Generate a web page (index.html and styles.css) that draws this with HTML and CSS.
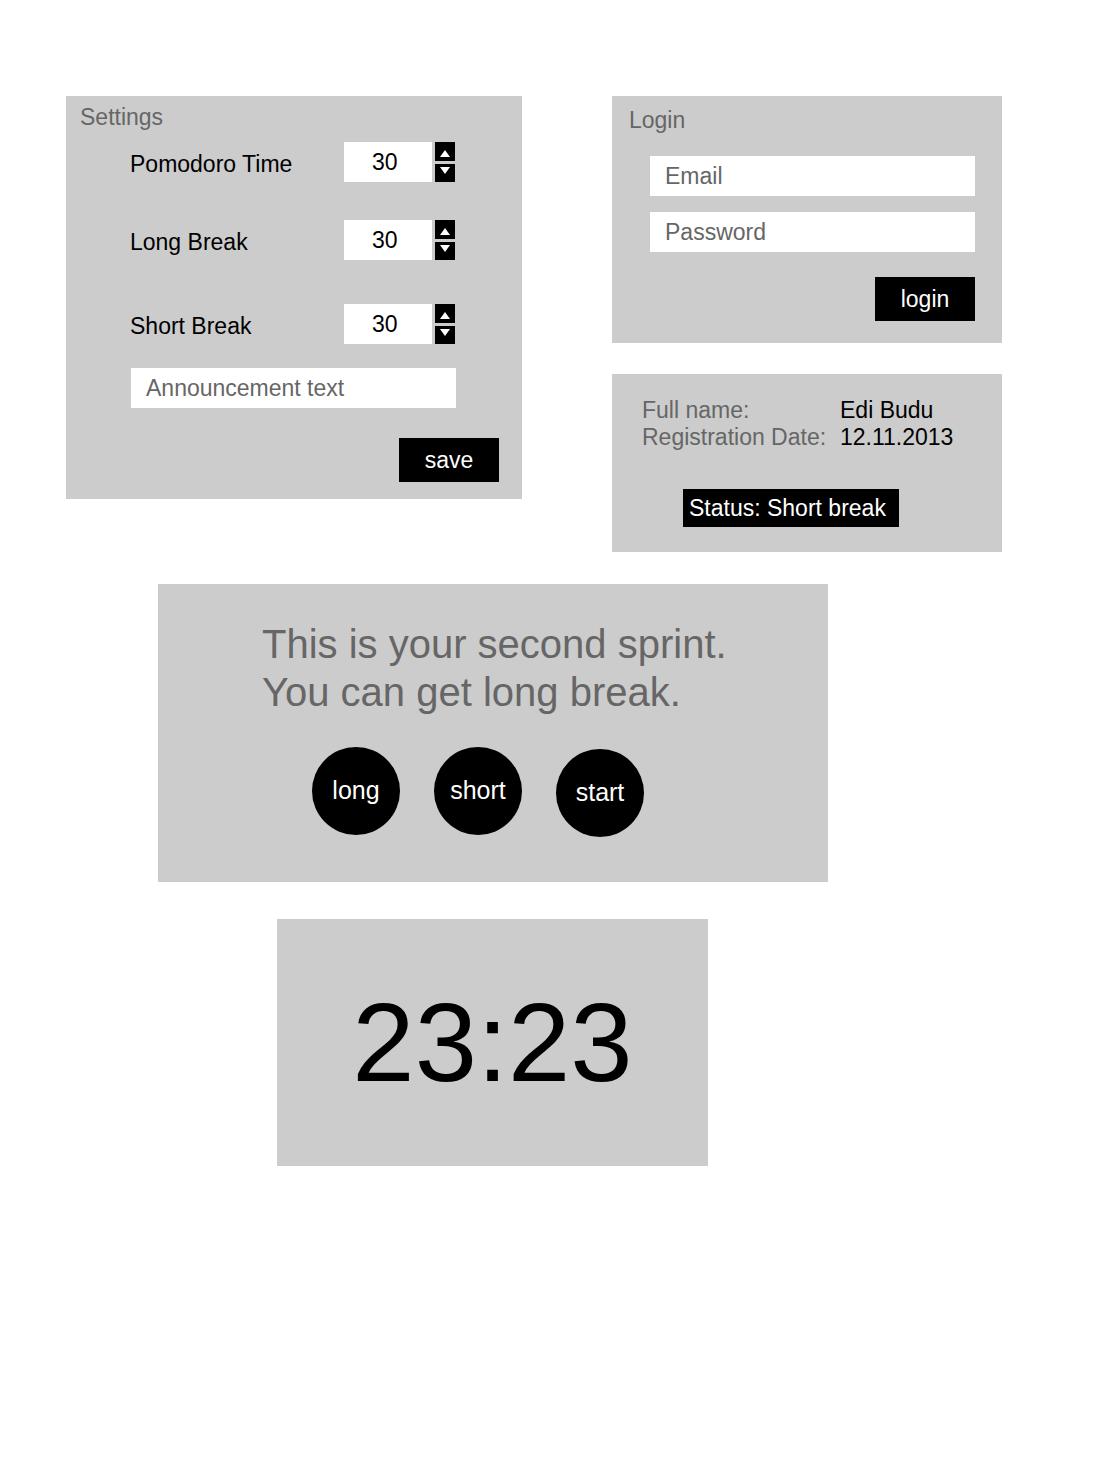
FILE: index.html
```html
<!DOCTYPE html>
<html lang="en">
<head>
<meta charset="utf-8">
<title>Pomodoro wireframe</title>
<link rel="stylesheet" href="styles.css">
</head>
<body>
<div class="canvas">
  <div class="top-row">
    <section class="panel settings">
      <div class="panel-title">Settings</div>
      <div class="setting-row row-1">
        <span class="setting-label">Pomodoro Time</span>
        <div class="num-field">30</div>
        <svg class="spinner" width="20" height="40" viewBox="0 0 20 40" aria-hidden="true">
          <rect x="0" y="0" width="20" height="19" fill="#000"/>
          <polygon points="5,15 15,15 10,8" fill="#fff"/>
          <rect x="0" y="22" width="20" height="18" fill="#000"/>
          <polygon points="5,25 15,25 10,32" fill="#fff"/>
        </svg>
      </div>
      <div class="setting-row row-2">
        <span class="setting-label">Long Break</span>
        <div class="num-field">30</div>
        <svg class="spinner" width="20" height="40" viewBox="0 0 20 40" aria-hidden="true">
          <rect x="0" y="0" width="20" height="19" fill="#000"/>
          <polygon points="5,15 15,15 10,8" fill="#fff"/>
          <rect x="0" y="22" width="20" height="18" fill="#000"/>
          <polygon points="5,25 15,25 10,32" fill="#fff"/>
        </svg>
      </div>
      <div class="setting-row row-3">
        <span class="setting-label">Short Break</span>
        <div class="num-field">30</div>
        <svg class="spinner" width="20" height="40" viewBox="0 0 20 40" aria-hidden="true">
          <rect x="0" y="0" width="20" height="19" fill="#000"/>
          <polygon points="5,15 15,15 10,8" fill="#fff"/>
          <rect x="0" y="22" width="20" height="18" fill="#000"/>
          <polygon points="5,25 15,25 10,32" fill="#fff"/>
        </svg>
      </div>
      <div class="text-field announcement">Announcement text</div>
      <div class="btn save-btn">save</div>
    </section>

    <div class="right-col">
      <section class="panel login">
        <div class="panel-title">Login</div>
        <div class="text-field email">Email</div>
        <div class="text-field password">Password</div>
        <div class="btn login-btn">login</div>
      </section>

      <section class="panel profile">
        <div class="info-grid">
          <span class="info-label">Full name:</span>
          <span class="info-value">Edi Budu</span>
          <span class="info-label">Registration Date:</span>
          <span class="info-value">12.11.2013</span>
        </div>
        <div class="status-badge">Status: Short break</div>
      </section>
    </div>
  </div>

  <section class="panel sprint">
    <p class="sprint-msg">This is your second sprint.<br>You can get long break.</p>
    <div class="circle-row">
      <div class="circle-btn">long</div>
      <div class="circle-btn">short</div>
      <div class="circle-btn circle-start">start</div>
    </div>
  </section>

  <section class="panel timer">
    <span class="timer-text">23:23</span>
  </section>
</div>
</body>
</html>
```

FILE: styles.css
```css
* {
  box-sizing: border-box;
  margin: 0;
  padding: 0;
}

body {
  margin: 0;
  background: #ffffff;
  font-family: "Liberation Sans", Arial, Helvetica, sans-serif;
  font-size: 23px;
  color: #000000;
}

.canvas {
  width: 1096px;
  min-height: 1466px;
  padding-top: 96px;
}

.top-row {
  display: flex;
  align-items: flex-start;
}

.panel {
  background: #cccccc;
}

.panel-title {
  color: #666666;
  line-height: 23px;
}

/* Settings */
.settings {
  margin-left: 66px;
  width: 456px;
  height: 403px;
  padding: 10px 23px 17px 14px;
  display: flex;
  flex-direction: column;
}

.setting-row {
  display: grid;
  grid-template-columns: 211px 88px 20px;
  column-gap: 3px;
  align-items: center;
  margin-left: 50px;
  height: 40px;
}

.row-1 { margin-top: 13px; }
.row-2 { margin-top: 38px; }
.row-3 { margin-top: 44px; }

.setting-label {
  padding-top: 4px;
  line-height: 23px;
}

.num-field {
  height: 40px;
  background: #ffffff;
  padding-left: 28px;
  display: flex;
  align-items: center;
}

.spinner {
  display: block;
}

.text-field {
  width: 325px;
  height: 40px;
  background: #ffffff;
  color: #666666;
  padding-left: 15px;
  display: flex;
  align-items: center;
}

.announcement {
  margin-top: 24px;
  margin-left: 51px;
}

.btn {
  width: 100px;
  height: 44px;
  background: #000000;
  color: #ffffff;
  display: flex;
  align-items: center;
  justify-content: center;
  align-self: flex-end;
}

.save-btn {
  margin-top: 30px;
}

/* Right column */
.right-col {
  margin-left: 90px;
  width: 390px;
  display: flex;
  flex-direction: column;
  gap: 31px;
}

.login {
  height: 247px;
  padding: 13px 27px 22px 17px;
  display: flex;
  flex-direction: column;
}

.email {
  margin-top: 24px;
  margin-left: 21px;
}

.password {
  margin-top: 16px;
  margin-left: 21px;
}

.login-btn {
  margin-top: 25px;
}

.profile {
  height: 178px;
  padding: 23px 0 25px 30px;
  display: flex;
  flex-direction: column;
}

.info-grid {
  display: grid;
  grid-template-columns: 198px auto;
  line-height: 27px;
}

.info-label {
  color: #666666;
}

.info-value {
  color: #000000;
}

.status-badge {
  align-self: flex-start;
  margin-top: 38px;
  margin-left: 41px;
  width: 216px;
  height: 38px;
  padding-left: 6px;
  background: #000000;
  color: #ffffff;
  display: flex;
  align-items: center;
}

/* Sprint */
.sprint {
  margin-top: 32px;
  margin-left: 158px;
  width: 670px;
  height: 298px;
  padding: 36px 0 0 104px;
}

.sprint-msg {
  font-size: 40px;
  line-height: 48px;
  color: #666666;
}

.circle-row {
  display: flex;
  align-items: flex-start;
  gap: 34px;
  margin-top: 31px;
  margin-left: 50px;
}

.circle-btn {
  width: 88px;
  height: 88px;
  border-radius: 50%;
  background: #000000;
  color: #ffffff;
  font-size: 25px;
  display: flex;
  align-items: center;
  justify-content: center;
  padding-bottom: 2px;
}

.circle-start {
  margin-top: 2px;
}

/* Timer */
.timer {
  margin-top: 37px;
  margin-left: 277px;
  width: 431px;
  height: 247px;
  display: flex;
  align-items: center;
  justify-content: center;
}

.timer-text {
  font-size: 112px;
  line-height: 1;
}
```
